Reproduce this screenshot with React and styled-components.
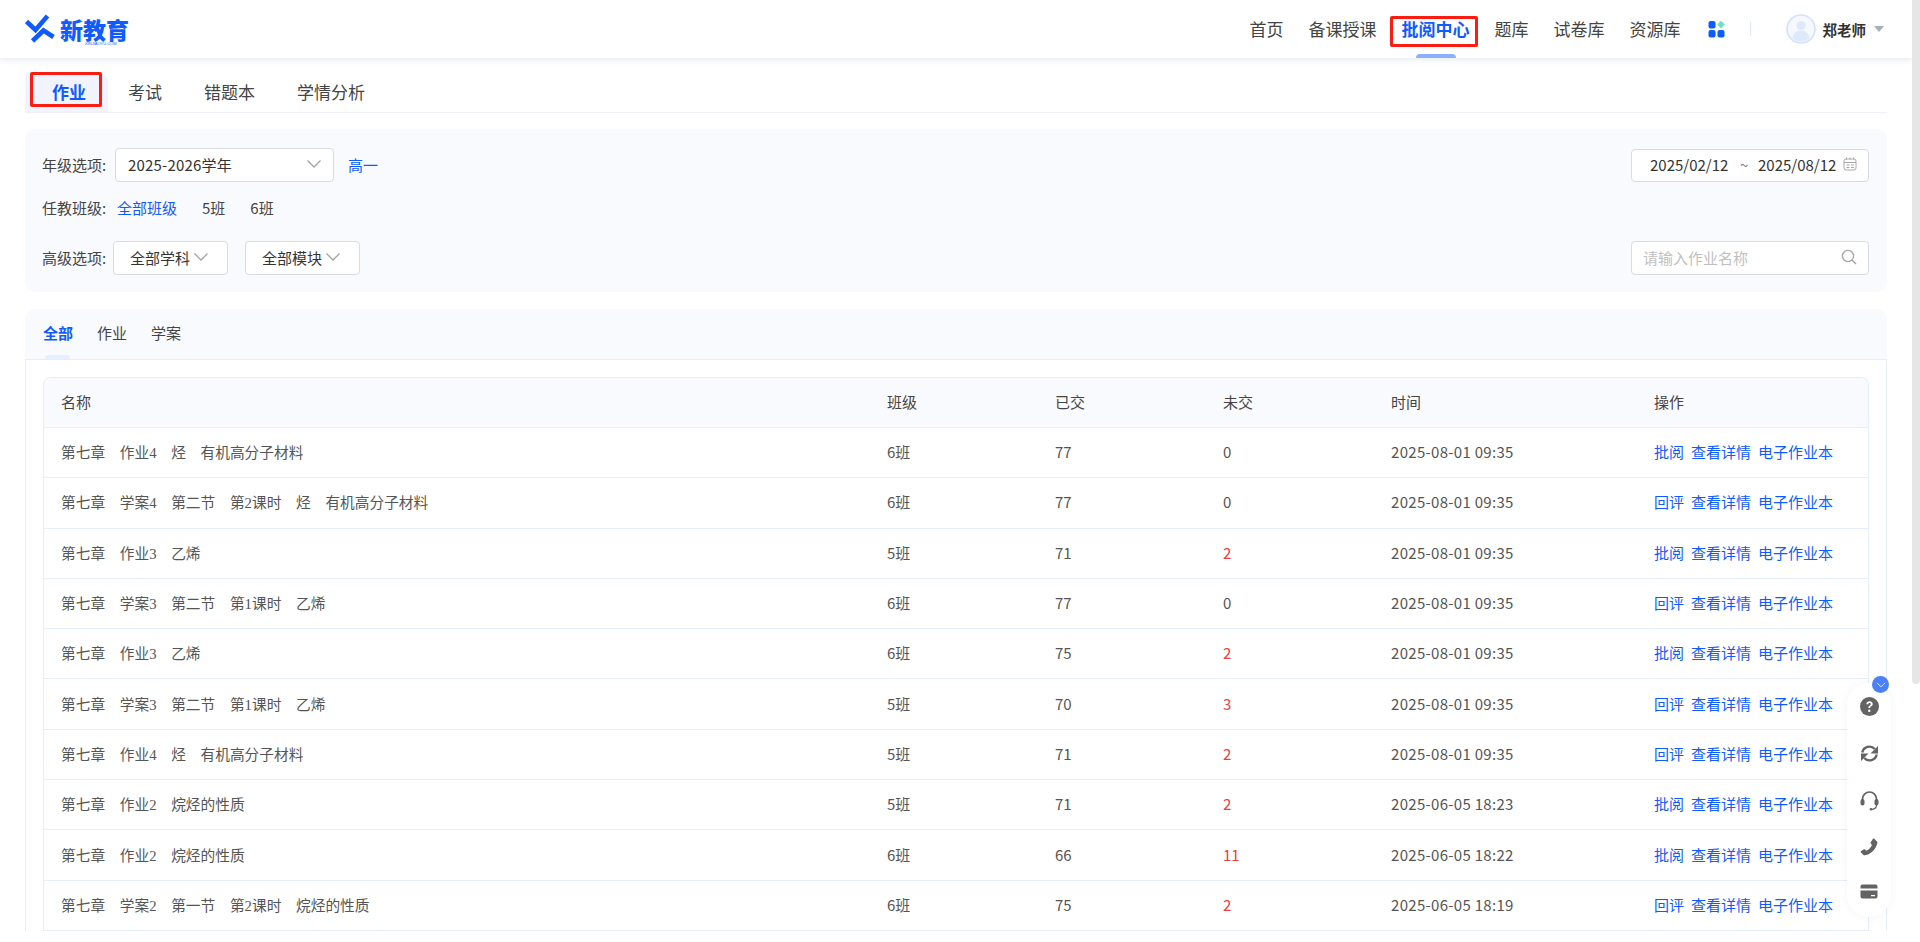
import React from "react";
import styled, { createGlobalStyle } from "styled-components";

const Global = createGlobalStyle`
  html { scrollbar-width: none; }
  body {
    margin: 0;
    background: #fff;
    color: #333;
    font-family: "Noto Sans CJK SC", "Noto Sans", sans-serif;
    font-size: 15px;
  }
`;

const BLUE = "#0f5bff";

const Page = styled.div`
  min-height: 1297px;
  margin-right: 8px;
`;

const ScrollThumb = styled.div`
  position: fixed;
  top: 0;
  right: 0;
  width: 8px;
  height: 684px;
  background: #e6e6e6;
  border-radius: 0 0 4px 4px;
`;

const Header = styled.header`
  height: 58px;
  display: flex;
  align-items: center;
  justify-content: space-between;
  padding: 0 28px 0 24px;
  background: #fff;
  box-shadow: 0 2px 6px rgba(30, 50, 100, 0.1);
  position: relative;
`;

const Logo = styled.div`
  display: flex;
  align-items: center;
  gap: 4px;
`;

const LogoText = styled.div`
  position: relative;
  color: ${BLUE};
  font-size: 23px;
  font-weight: 900;
  line-height: 26px;
`;

const LogoSub = styled.span`
  position: absolute;
  left: 25px;
  top: 26px;
  font-family: "Liberation Sans", sans-serif;
  font-size: 4px;
  font-weight: 400;
  line-height: 4px;
  white-space: nowrap;
`;

const Nav = styled.nav`
  display: flex;
  align-items: center;
`;

const NavItem = styled.a`
  position: relative;
  height: 58px;
  line-height: 57px;
  margin-right: ${(p) => p.$gap || 25}px;
  font-size: 17px;
  color: #444;
  font-weight: ${(p) => (p.$active ? 700 : 400)};
  ${(p) => p.$active && `color: ${BLUE};`}
`;

const Marked = styled.span`
  position: absolute;
  border: 3px solid #fb1d12;
  border-radius: 2px;
  pointer-events: none;
  left: ${(p) => p.$l}px;
  right: ${(p) => p.$r}px;
  top: ${(p) => p.$t}px;
  bottom: ${(p) => p.$b}px;
`;

const NavBar = styled.span`
  position: absolute;
  left: 14px;
  bottom: 0;
  width: 40px;
  height: 4px;
  border-radius: 4px 4px 0 0;
  background: #8ab0ff;
`;

const Divider = styled.span`
  width: 1px;
  height: 14px;
  margin: 0 35px 0 24px;
  background: #dfe8f8;
`;

const User = styled.div`
  display: flex;
  align-items: center;
  gap: 7px;
  font-size: 14.5px;
  font-weight: 700;
  color: #333;
`;

const Caret = styled.span`
  width: 0;
  height: 0;
  margin-left: 1px;
  border-left: 5px solid transparent;
  border-right: 5px solid transparent;
  border-top: 6px solid #a6adbb;
`;

const Main = styled.main`
  padding: 0 25px;
`;

const SubTabs = styled.div`
  display: flex;
  align-items: stretch;
  height: 55px;
  border-bottom: 1px solid #eef1f8;
  box-sizing: border-box;
  padding-top: 14px;
  margin-bottom: 16px;
`;

const SubTab = styled.a`
  position: relative;
  font-size: 17px;
  line-height: 40px;
  color: #444;
  margin-right: 42px;
  ${(p) =>
    p.$active &&
    `
    box-sizing: border-box;
    width: 83px;
    margin-right: 20px;
    padding-left: 5px;
    text-align: center;
    color: ${BLUE};
    font-weight: 700;
    background: #f1f4ff;
    border-radius: 4px 10px 0 0;
  `}
`;

const Filter = styled.section`
  height: 163px;
  box-sizing: border-box;
  padding: 19px 18px 0 17px;
  background: #f9fafe;
  border-radius: 10px;
  display: grid;
  grid-template-rows: 34px 59px 34px;
  margin-bottom: 17px;
`;

const FilterRow = styled.div`
  display: flex;
  align-items: center;
  justify-content: space-between;
  padding-bottom: ${(p) => p.$lift || 0}px;
`;

const FilterLeft = styled.div`
  display: flex;
  align-items: center;
`;

const Label = styled.span`
  width: 71px;
  padding-bottom: 2px;
  color: #444;
  white-space: nowrap;
`;

const Select = styled.div`
  display: flex;
  align-items: center;
  justify-content: space-between;
  box-sizing: border-box;
  height: 34px;
  width: ${(p) => p.$w}px;
  margin-left: ${(p) => p.$ml || 0}px;
  padding: 0 18px 2px 16px;
  background: #fff;
  border: 1px solid #d9dce2;
  border-radius: 4px;
  color: #333;
  ${(p) => p.$wide && `padding-left: 12px; padding-right: 11px; letter-spacing: 0.2px;`}
`;

const Option = styled.a`
  margin-left: ${(p) => p.$ml}px;
  padding-bottom: 2px;
  color: ${(p) => (p.$active ? BLUE : "#444")};
`;

const Field = styled.div`
  display: flex;
  align-items: center;
  justify-content: space-between;
  box-sizing: border-box;
  width: 238px;
  height: ${(p) => (p.$placeholder ? 34 : 33)}px;
  padding: 0 11px 2px ${(p) => (p.$placeholder ? 11 : 18)}px;
  background: #fff;
  border: 1px solid #d9dce2;
  border-radius: 4px;
  color: ${(p) => (p.$placeholder ? "#bfbfbf" : "#333")};
  white-space: nowrap;
`;

const Tilde = styled.span`
  margin: 0 3px 0 5px;
  color: #777;
`;

const Panel = styled.section`
  background: #f9fafe;
  border-radius: 10px 10px 0 0;
`;

const TypeTabs = styled.div`
  display: flex;
  gap: 24px;
  height: 50px;
  padding: 0 18px;
  box-sizing: border-box;
`;

const TypeTab = styled.a`
  position: relative;
  line-height: 48px;
  color: ${(p) => (p.$active ? BLUE : "#444")};
  font-weight: ${(p) => (p.$active ? 700 : 400)};
  ${(p) =>
    p.$active &&
    `
    &::after {
      content: "";
      position: absolute;
      left: 2px;
      bottom: 0;
      width: 25px;
      height: 4px;
      border-radius: 4px 4px 0 0;
      background: #e6eeff;
    }
  `}
`;

const PanelBody = styled.div`
  background: #fff;
  border: 1px solid #e6edfb;
  border-bottom: 0;
  padding: 17px 17px 0 17px;
`;

const Table = styled.div`
  border: 1px solid #e6edfb;
  border-bottom: 0;
  border-radius: 8px 8px 0 0;
  overflow: hidden;
`;

const Row = styled.div`
  display: grid;
  grid-template-columns: 826px 168px 168px 168px 263px 1fr;
  align-items: center;
  box-sizing: border-box;
  height: ${(p) => (p.$head ? 50 : 50.3)}px;
  padding: 0 0 2px 17px;
  border-bottom: 1px solid #e6edfb;
  background: ${(p) => (p.$head ? "#f9fafe" : "#fff")};
  color: ${(p) => (p.$head ? "#444" : "#555")};
`;

const Title = styled.span`
  font-family: "Liberation Serif", "Noto Sans CJK SC", serif;
  font-size: 14.7px;
`;

const Time = styled.span`
  letter-spacing: 0.3px;
`;

const Count = styled.span`
  color: ${(p) => (p.$late ? "#e8403a" : "#555")};
`;

const Actions = styled.div`
  display: flex;
  gap: 7px;
  white-space: nowrap;
`;

const Action = styled.a`
  color: ${BLUE};
`;

const Dock = styled.aside`
  position: fixed;
  right: 29px;
  top: 683px;
  width: 44px;
  height: 234px;
  display: flex;
  flex-direction: column;
  align-items: center;
  justify-content: space-between;
  box-sizing: border-box;
  padding: 14px 0 18px;
  background: rgba(255, 255, 255, 0.92);
  border-radius: 22px;
  box-shadow: 0 0 8px rgba(40, 60, 120, 0.06);
`;

const DockToggle = styled.span`
  position: absolute;
  top: -7px;
  right: 2px;
  width: 17px;
  height: 17px;
  display: flex;
  align-items: center;
  justify-content: center;
  border-radius: 50%;
  background: #4b80fb;
`;

const Chevron = ({ size = 16, color = "#a3a3a3" }) => (
  <svg width={size} height={size} viewBox="0 0 16 16" fill="none">
    <path d="M1.500 4.500 8 11l6.500-6.500" stroke={color} strokeWidth="1.3" />
  </svg>
);

const Grid = () => (
  <svg width="18" height="18" viewBox="0 0 18 18">
    <rect x="0.5" y="1" width="7" height="7.5" rx="2" fill={BLUE} />
    <rect x="0.5" y="10" width="7" height="7.5" rx="2" fill={BLUE} />
    <rect x="9.5" y="10" width="7" height="7.5" rx="2" fill={BLUE} />
    <path d="M13 .8l3.800 3.800L13 8.400 9.200 4.600z" fill="#72dcc9" />
  </svg>
);

const Avatar = () => (
  <svg width="30" height="30" viewBox="0 0 30 30">
    <circle cx="15" cy="15" r="14" fill="#f5f8ff" stroke="#d5e2fc" strokeWidth="1.6" />
    <circle cx="15" cy="11.5" r="4.6" fill="#e0e9fb" />
    <path d="M6.500 24c.6-5 4-7.500 8.500-7.500s7.900 2.500 8.500 7.500c-2.500 2.400-5.200 3.500-8.500 3.500S9 26.400 6.500 24z" fill="#e0e9fb" />
  </svg>
);

const Mark = () => (
  <svg width="32" height="32" viewBox="0 0 32 32" fill="none" stroke={BLUE} strokeWidth="4.6" strokeLinejoin="miter">
    <path d="M2.500 8.500 11.500 17 23.500 3" />
    <path d="M8.500 28 19.500 17.500 29.500 24" />
  </svg>
);

const Calendar = () => (
  <svg width="14" height="14" viewBox="0 0 14 14" fill="none" stroke="#a8a8a8">
    <rect x="1" y="2" width="12" height="11" rx="2" />
    <path d="M1 5.500h12M3.500 .5v2M7 .5v2M10.500 .5v2M3.500 8h3M8 8h3M3.500 10.500h3M8 10.500h3" />
  </svg>
);

const Search = () => (
  <svg width="16" height="16" viewBox="0 0 16 16" fill="none" stroke="#a3a3a3" strokeWidth="1.3">
    <circle cx="7" cy="7" r="5.600" />
    <path d="M11.200 11.200 15 15" />
  </svg>
);

const Help = () => (
  <svg width="19" height="19" viewBox="0 0 19 19">
    <circle cx="9.500" cy="9.500" r="9.500" fill="#636363" />
    <path d="M6.300 7.300c.1-1.900 1.400-3 3.300-3 1.800 0 3.100 1 3.100 2.600 0 1.200-.6 1.800-1.500 2.400-.8.500-1 .8-1 1.600H8.400c0-1.300.4-1.900 1.300-2.500.7-.5 1.100-.8 1.100-1.400 0-.7-.5-1.100-1.200-1.100-.8 0-1.300.5-1.400 1.400z" fill="#fff" />
    <circle cx="9.300" cy="13.800" r="1.200" fill="#fff" />
  </svg>
);

const Sync = () => (
  <svg width="19" height="19" viewBox="0 0 19 19">
    <path d="M2.300 8.500A7.300 7.300 0 0 1 14.800 5" fill="none" stroke="#636363" strokeWidth="2.4" />
    <path d="M18 2v7.500h-7.500z" fill="#636363" />
    <path d="M16.700 10.500A7.300 7.300 0 0 1 4.200 14" fill="none" stroke="#636363" strokeWidth="2.4" />
    <path d="M1 17V9.500h7.500z" fill="#636363" />
  </svg>
);

const Headset = () => (
  <svg width="19" height="20" viewBox="0 0 19 20">
    <path d="M2.500 9.500V8a7 7 0 0 1 14 0v1.500" fill="none" stroke="#636363" strokeWidth="1.7" />
    <rect x="0.500" y="8" width="4" height="6.500" rx="2" fill="#636363" />
    <rect x="14.500" y="8" width="4" height="6.500" rx="2" fill="#636363" />
    <path d="M16.500 14c0 2.500-1.500 4-4.500 4.300" fill="none" stroke="#636363" strokeWidth="1.2" />
    <circle cx="11" cy="18.300" r="1.300" fill="#636363" />
  </svg>
);

const Phone = () => (
  <svg width="18" height="18" viewBox="0 0 18 18">
    <path d="M13 .8c.4-.3 1-.3 1.300 0l2.700 2.700c.4.400.5.900.4 1.400-1.600 6.500-6 10.700-12.500 12.400-.5.100-1 0-1.400-.4L1 14.400c-.4-.4-.3-1 .1-1.300l2.500-1.700c.4-.3.900-.2 1.300.1l1.400 1.300c2.600-1.300 4.500-3.200 5.700-5.800l-1.200-1.400c-.3-.4-.4-.9-.1-1.300z" fill="#636363" />
  </svg>
);

const Card = () => (
  <svg width="18" height="15" viewBox="0 0 18 15">
    <path d="M2.500 .5h13A2 2 0 0 1 17.500 2.500v2H.5v-2A2 2 0 0 1 2.500 .5zM.5 6.500h17v6a2 2 0 0 1-2 2h-13a2 2 0 0 1-2-2zM11 11v1.200h4V11z" fill="#636363" fillRule="evenodd" />
  </svg>
);

const rows = [
  ["第七章　作业4　烃　有机高分子材料", "6班", 77, 0, "2025-08-01 09:35", "批阅"],
  ["第七章　学案4　第二节　第2课时　烃　有机高分子材料", "6班", 77, 0, "2025-08-01 09:35", "回评"],
  ["第七章　作业3　乙烯", "5班", 71, 2, "2025-08-01 09:35", "批阅"],
  ["第七章　学案3　第二节　第1课时　乙烯", "6班", 77, 0, "2025-08-01 09:35", "回评"],
  ["第七章　作业3　乙烯", "6班", 75, 2, "2025-08-01 09:35", "批阅"],
  ["第七章　学案3　第二节　第1课时　乙烯", "5班", 70, 3, "2025-08-01 09:35", "回评"],
  ["第七章　作业4　烃　有机高分子材料", "5班", 71, 2, "2025-08-01 09:35", "回评"],
  ["第七章　作业2　烷烃的性质", "5班", 71, 2, "2025-06-05 18:23", "批阅"],
  ["第七章　作业2　烷烃的性质", "6班", 66, 11, "2025-06-05 18:22", "批阅"],
  ["第七章　学案2　第一节　第2课时　烷烃的性质", "6班", 75, 2, "2025-06-05 18:19", "回评"],
];

export default function App() {
  return (
    <Page>
      <Global />
      <Header>
        <Logo>
          <Mark />
          <LogoText>
            新教育
            <LogoSub>XINJIAOYU.COM</LogoSub>
          </LogoText>
        </Logo>
        <Nav>
          <NavItem>首页</NavItem>
          <NavItem>备课授课</NavItem>
          <NavItem $active>
            批阅中心
            <Marked $l={-12} $r={-8} $t={16} $b={11} />
            <NavBar />
          </NavItem>
          <NavItem>题库</NavItem>
          <NavItem>试卷库</NavItem>
          <NavItem $gap={27}>资源库</NavItem>
          <Grid />
          <Divider />
          <User>
            <Avatar />
            郑老师
            <Caret />
          </User>
        </Nav>
      </Header>
      <Main>
        <SubTabs>
          <SubTab $active>
            作业
            <Marked $l={5} $r={6} $t={0} $b={5} />
          </SubTab>
          <SubTab>考试</SubTab>
          <SubTab>错题本</SubTab>
          <SubTab>学情分析</SubTab>
        </SubTabs>
        <Filter>
          <FilterRow>
            <FilterLeft>
              <Label>年级选项:</Label>
              <Select $w={219} $ml={2} $wide>
                2025-2026学年
                <Chevron />
              </Select>
              <Option $ml={14} $active>高一</Option>
            </FilterLeft>
            <Field>
              2025/02/12
              <Tilde>~</Tilde>
              2025/08/12
              <Calendar />
            </Field>
          </FilterRow>
          <FilterRow $lift={7}>
            <FilterLeft>
              <Label>任教班级:</Label>
              <Option $ml={4} $active>全部班级</Option>
              <Option $ml={25}>5班</Option>
              <Option $ml={25}>6班</Option>
            </FilterLeft>
          </FilterRow>
          <FilterRow>
            <FilterLeft>
              <Label>高级选项:</Label>
              <Select $w={115}>
                全部学科
                <Chevron />
              </Select>
              <Select $w={115} $ml={17}>
                全部模块
                <Chevron />
              </Select>
            </FilterLeft>
            <Field $placeholder>
              请输入作业名称
              <Search />
            </Field>
          </FilterRow>
        </Filter>
        <Panel>
          <TypeTabs>
            <TypeTab $active>全部</TypeTab>
            <TypeTab>作业</TypeTab>
            <TypeTab>学案</TypeTab>
          </TypeTabs>
          <PanelBody>
            <Table>
              <Row $head>
                <span>名称</span>
                <span>班级</span>
                <span>已交</span>
                <span>未交</span>
                <span>时间</span>
                <span>操作</span>
              </Row>
              {rows.map((r, i) => (
                <Row key={i}>
                  <Title>{r[0]}</Title>
                  <span>{r[1]}</span>
                  <span>{r[2]}</span>
                  <Count $late={r[3] > 0}>{r[3]}</Count>
                  <Time>{r[4]}</Time>
                  <Actions>
                    <Action>{r[5]}</Action>
                    <Action>查看详情</Action>
                    <Action>电子作业本</Action>
                  </Actions>
                </Row>
              ))}
            </Table>
          </PanelBody>
        </Panel>
      </Main>
      <ScrollThumb />
      <Dock>
        <DockToggle>
          <Chevron size={10} color="#fff" />
        </DockToggle>
        <Help />
        <Sync />
        <Headset />
        <Phone />
        <Card />
      </Dock>
    </Page>
  );
}
